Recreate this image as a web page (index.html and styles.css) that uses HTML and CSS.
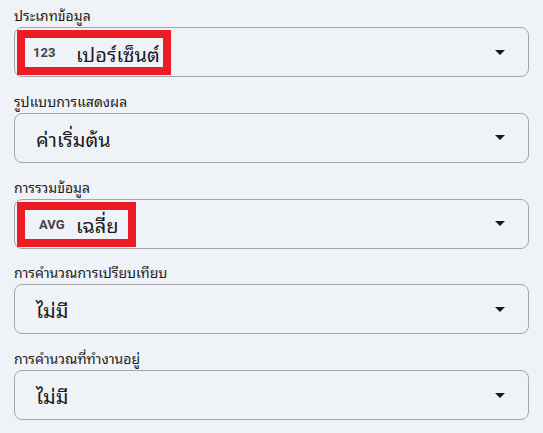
FILE: index.html
```html
<!DOCTYPE html>
<html lang="th">
<head>
<meta charset="utf-8">
<link rel="stylesheet" href="styles.css">
</head>
<body>
<div class="form">
  <div class="field">
    <div class="label">ประเภทข้อมูล</div>
    <div class="select">
      <span class="value marked mark-wide"><span class="tag">123</span><span class="text">เปอร์เซ็นต์</span></span>
      <span class="caret"></span>
    </div>
  </div>
  <div class="field">
    <div class="label">รูปแบบการแสดงผล</div>
    <div class="select">
      <span class="value plain"><span class="text">ค่าเริ่มต้น</span></span>
      <span class="caret"></span>
    </div>
  </div>
  <div class="field">
    <div class="label">การรวมข้อมูล</div>
    <div class="select">
      <span class="value marked mark-narrow"><span class="tag tag-shift">AVG</span><span class="text">เฉลี่ย</span></span>
      <span class="caret"></span>
    </div>
  </div>
  <div class="field">
    <div class="label">การคำนวณการเปรียบเทียบ</div>
    <div class="select">
      <span class="value plain"><span class="text">ไม่มี</span></span>
      <span class="caret"></span>
    </div>
  </div>
  <div class="field">
    <div class="label">การคำนวณที่ทำงานอยู่</div>
    <div class="select">
      <span class="value plain"><span class="text">ไม่มี</span></span>
      <span class="caret"></span>
    </div>
  </div>
</div>
</body>
</html>
```

FILE: styles.css
```css
html, body {
  margin: 0;
  padding: 0;
  background: #eff2f7;
}
body {
  font-family: "Noto Sans Thai Looped", "Tahoma", "Leelawadee UI", "Loma", "Garuda", "Noto Sans Thai", "Noto Sans", sans-serif;
  color: #1f1f1f;
}
.form {
  display: flex;
  flex-direction: column;
  gap: 14.75px;
  padding: 6px 14px 0 14px;
  width: 515px;
}
.field {
  display: flex;
  flex-direction: column;
  gap: 3px;
}
.label {
  font-size: 14px;
  line-height: 18px;
  height: 18px;
  color: #222;
  white-space: nowrap;
}
.select {
  box-sizing: border-box;
  height: 50px;
  border: 1px solid #a3a6ab;
  border-radius: 8px;
  display: flex;
  align-items: center;
  justify-content: space-between;
  padding: 0 23px 0 10px;
}
.value {
  display: flex;
  align-items: center;
  height: 29px;
  font-size: 20px;
  color: #1c1c1c;
  white-space: nowrap;
}
.value.plain {
  padding-left: 11px;
}
.value.marked {
  box-sizing: border-box;
  outline: 8px solid #ed1c24;
  padding: 0 0 0 8px;
  margin-top: 1px;
}
.mark-wide {
  width: 138px;
}
.mark-narrow {
  width: 103px;
}
.tag {
  font-family: "Roboto", sans-serif;
  font-weight: bold;
  font-size: 13px;
  color: #444;
  width: 43px;
  box-sizing: border-box;
}
.tag-shift {
  padding-left: 6px;
}
.caret {
  width: 0;
  height: 0;
  border-left: 5px solid transparent;
  border-right: 5px solid transparent;
  border-top: 5px solid #1a1a1a;
}
```
